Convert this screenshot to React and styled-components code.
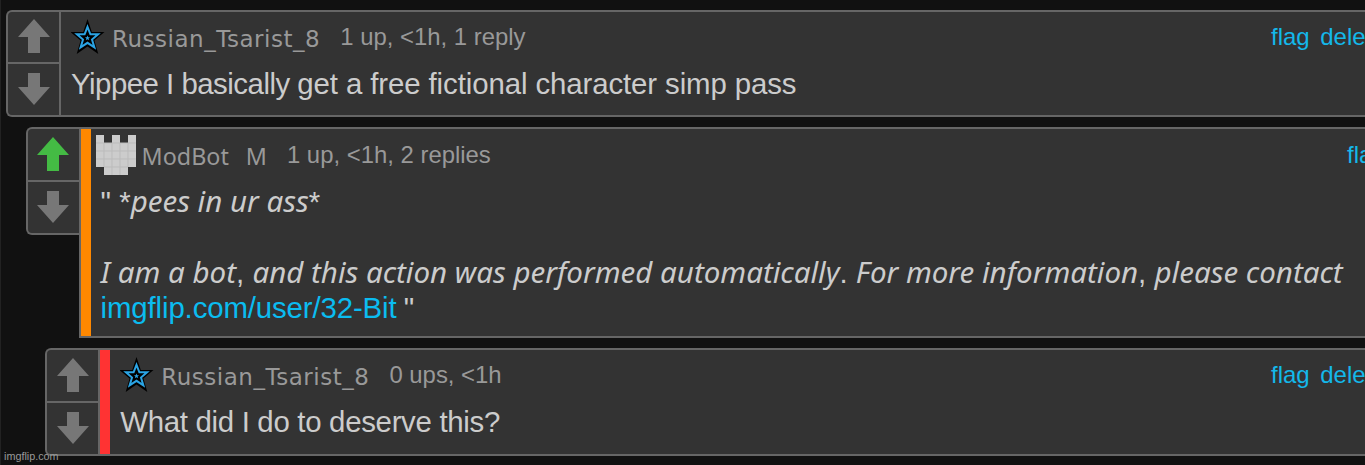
import React from "react";
import styled, { createGlobalStyle } from "styled-components";

const GlobalStyle = createGlobalStyle`
  * {
    box-sizing: border-box;
  }
  body {
    margin: 0;
    background: #111;
    overflow: hidden;
  }
`;

const Page = styled.div`
  display: flex;
  flex-direction: column;
  gap: 10px;
  width: 1365px;
  height: 465px;
  padding: 10px 0 0 5px;
  overflow: hidden;
  background: #111;
  border-left: 1px solid #222;
  color: #ccc;
  font-family: "Liberation Sans", Arial, sans-serif;
`;

const Comment = styled.div`
  display: flex;
  align-items: flex-start;
  flex-shrink: 0;
  margin-left: ${({ $depth }) => $depth * 19.6}px;
`;

const Votes = styled.div`
  display: flex;
  flex-direction: column;
  flex-shrink: 0;
  width: 53px;
  height: ${({ $height }) => $height || 108}px;
  background: #333;
  border: 2px solid #666;
  border-right: none;
  border-radius: 6px 0 0 6px;
`;

const VoteButton = styled.button`
  display: flex;
  align-items: center;
  justify-content: center;
  flex: 1;
  padding: 0;
  border: none;
  background: transparent;
  color: ${({ $active }) => ($active ? "#4b4" : "#777")};

  &:first-child {
    flex: none;
    height: ${({ $height }) => $height || 51}px;
    padding-bottom: 2px;
  }

  & + & {
    padding-bottom: 1px;
    border-top: 2px solid #666;
  }
`;

const Box = styled.div`
  flex: 1;
  min-width: 0;
  height: ${({ $height }) => $height}px;
  border: 2px solid #666;
  border-right: none;
  background: #333;
`;

const Inner = styled.div`
  height: 100%;
  padding-left: 10px;
  border-left: ${({ $bar }) => ($bar ? `10px solid ${$bar}` : "none")};
`;

const Top = styled.div`
  display: flex;
  align-items: center;
  height: ${({ $height }) => $height || 54}px;
  padding-bottom: ${({ $bottom }) => $bottom || 5}px;
  white-space: nowrap;

  svg {
    flex-shrink: 0;
  }
`;

const Name = styled.span`
  margin-left: 7px;
  padding-top: 5px;
  color: #999;
  font-family: "DejaVu Sans", sans-serif;
  font-size: 23px;
  letter-spacing: 0.52px;
`;

const ModName = styled(Name)`
  margin-left: ${({ $gap }) => $gap}px;
  padding-top: 2px;
  font-family: "Noto Sans", sans-serif;
  font-size: 23.3px;
  letter-spacing: 0;
`;

const Stats = styled.span`
  margin-left: 20px;
  color: #999;
  font-size: 23.9px;
`;

const Actions = styled.div`
  display: flex;
  gap: 10.5px;
  width: ${({ $width }) => $width}px;
  margin-left: auto;
  color: #14b8ea;
  font-size: 24px;
`;

const Text = styled.div`
  color: #ccc;
  font-size: 29.4px;
  line-height: 35.3px;
  white-space: nowrap;
`;

const Tracked = styled.span`
  letter-spacing: ${({ $spacing }) => $spacing}px;
  font-feature-settings: "liga" 1;
`;

const Slant = styled.i`
  font-family: "Noto Sans", sans-serif;
  font-size: 29.53px;
  line-height: 1;
`;

const Link = styled(Tracked)`
  color: #0bbcf0;
`;

const Watermark = styled.div`
  position: absolute;
  left: 4px;
  top: 450px;
  color: #999;
  font-family: "Liberation Sans", Arial, sans-serif;
  font-size: 10.8px;
  line-height: 13px;
`;

const Arrow = ({ down }) =>
  down ? (
    <svg width="32" height="32" viewBox="0 0 32 32" fill="currentColor">
      <path d="M10 0H22V14H32L16 32L0 14H10Z" />
    </svg>
  ) : (
    <svg width="32" height="34" viewBox="0 0 32 34" fill="currentColor">
      <path d="M16 0L32 18H22V34H10V18H0Z" />
    </svg>
  );

const Star = () => (
  <svg width="34" height="36" viewBox="-16.5 -19 34 36">
    <path d="M0 -19L4.3 -6L17 -6L6.9 2.5L10.8 16L0 8.5L-10.8 16L-6.9 2.5L-17 -6L-4.3 -6Z" fill="#000" />
    <path d="M0 -11.2L2.9 -3.7L10.6 -3.7L4.5 1.5L6.9 9.4L0 4.8L-6.9 9.4L-4.5 1.5L-10.6 -3.7L-2.9 -3.7Z" fill="none" stroke="#2ba4e4" strokeWidth="2" />
    <path d="M0 -2.5L.7 -.8L2.5 -.8L1.1 .4L1.6 2.2L0 1.2L-1.6 2.2L-1.1 .4L-2.5 -.8L-.7 -.8Z" fill="#2ba4e4" />
  </svg>
);

const CastleIcon = styled.svg`
  margin-left: -5px;
`;

const Castle = () => (
  <CastleIcon width="40" height="40" viewBox="0 0 40 40">
    <path d="M0 0H8V8H16V0H24V8H32V0H40V32H32V40H8V32H0Z" fill="#ccc" />
    <path d="M0 8H40M0 16H40M0 24H40M8 32H32M8 8V32M16 8V40M24 8V40M32 8V32" stroke="#bbb" />
  </CastleIcon>
);

const App = () => (
  <>
    <GlobalStyle />
    <Page>
      <Comment $depth={0}>
        <Votes $height={107}>
          <VoteButton $height={50}><Arrow /></VoteButton>
          <VoteButton><Arrow down /></VoteButton>
        </Votes>
        <Box $height={107}>
          <Inner>
            <Top>
              <Star />
              <Name>Russian_Tsarist_8</Name>
              <Stats>1 up, &lt;1h, 1 reply</Stats>
              <Actions $width={94}><span>flag</span><span>delete</span></Actions>
            </Top>
            <Text>
              <Tracked $spacing={-0.5}>Yippee I basically </Tracked>
              <Tracked $spacing={-0.1}>get a free fictional character simp pass</Tracked>
            </Text>
          </Inner>
        </Box>
      </Comment>
      <Comment $depth={1}>
        <Votes>
          <VoteButton $active><Arrow /></VoteButton>
          <VoteButton><Arrow down /></VoteButton>
        </Votes>
        <Box $height={211}>
          <Inner $bar="#f80">
            <Top $height={55} $bottom={3}>
              <Castle />
              <ModName $gap={6}>ModBot</ModName>
              <ModName $gap={17}>M</ModName>
              <Stats>1 up, &lt;1h, 2 replies</Stats>
              <Actions $width={18}><span>flag</span></Actions>
            </Top>
            <Text>
              " *<Slant>pees in ur ass</Slant>*
              <br />
              <br />
              <Slant>I am a bot</Slant>, <Slant>and this action was performed automatically</Slant>. <Slant>For more information</Slant>, <Slant>please contact</Slant>
              <br />
              <Link $spacing={-0.13}>imgflip.com/user/32-Bit</Link><Tracked $spacing={-1}> "</Tracked>
            </Text>
          </Inner>
        </Box>
      </Comment>
      <Comment $depth={2}>
        <Votes>
          <VoteButton><Arrow /></VoteButton>
          <VoteButton><Arrow down /></VoteButton>
        </Votes>
        <Box $height={108}>
          <Inner $bar="#f33">
            <Top>
              <Star />
              <Name>Russian_Tsarist_8</Name>
              <Stats>0 ups, &lt;1h</Stats>
              <Actions $width={94}><span>flag</span><span>delete</span></Actions>
            </Top>
            <Text>
              <Tracked $spacing={-0.3}>What did I do to deserve this?</Tracked>
            </Text>
          </Inner>
        </Box>
      </Comment>
    </Page>
    <Watermark>imgflip.com</Watermark>
  </>
);

export default App;
